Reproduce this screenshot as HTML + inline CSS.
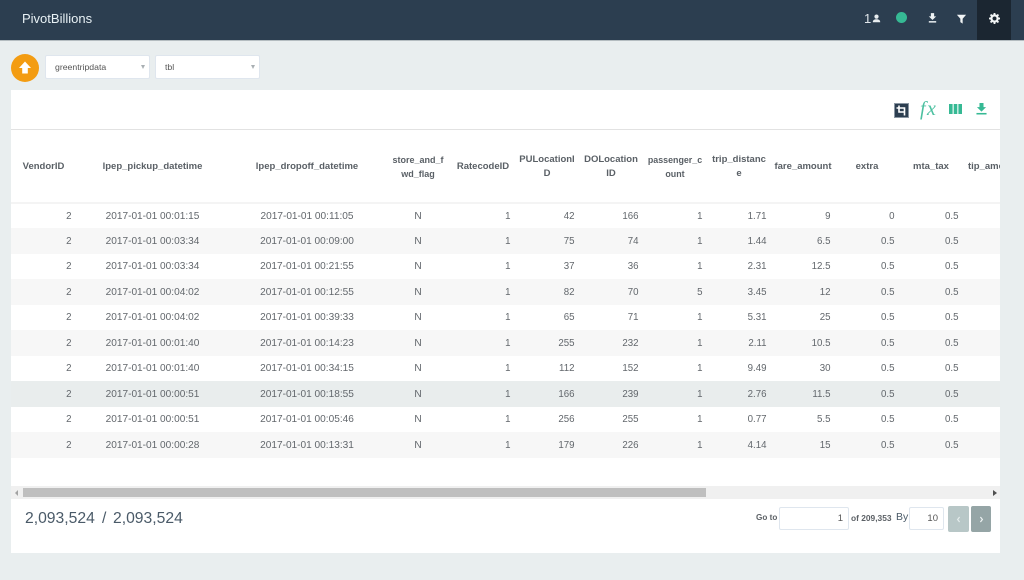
<!DOCTYPE html>
<html><head><meta charset="utf-8"><style>
html,body{margin:0;padding:0}
body{width:1024px;height:580px;position:relative;overflow:hidden;background:#e9eeef;font-family:"Liberation Sans",sans-serif;color:#555b60}
.a{position:absolute}
#nav{left:0;top:0;width:1024px;height:40px;background:#2c3e50;border-bottom:1px solid #b4bcc0}
.sel{top:55px;height:22px;background:#fff;border:1px solid #dfe6ee;font-size:8.7px;line-height:23px;color:#555;border-radius:2px}
.sel i{position:absolute;right:4px;top:9px;width:0;height:0;border-left:2.5px solid transparent;border-right:2.5px solid transparent;border-top:4px solid #a9afb3}
#card{left:11px;top:90px;width:989px;height:463px;background:#fff}
#wrap{left:11px;top:129px;width:989px;height:329px;overflow:hidden;border-top:1px solid #e2e2e2}
table{border-collapse:collapse;table-layout:fixed;width:1016px;font-size:9.5px}
th{height:73px;padding:2px 0 0;font-weight:bold;font-size:9.5px;line-height:14px;text-align:center;white-space:nowrap;color:#5a6066;border-bottom:2px solid #f4f4f4;box-sizing:border-box}
td{height:25px;padding:0 4.5px 0 0;text-align:right;box-sizing:border-box;color:#62676c;font-size:9.7px}
tr:nth-child(odd) td{height:26px}
td.c{text-align:center;padding:0;font-size:10.1px}
tr.s td{background:#f7f7f7}
tr.h td{background:#e9eded}
</style></head><body>
<div id="nav" class="a"></div>
<div class="a" style="left:22px;top:10px;font-size:13px;line-height:18px;color:#e8f1f5">PivotBillions</div>
<div class="a" style="left:864px;top:11px;font-size:13px;line-height:16px;color:#dfe5ea">1</div>
<svg class="a" style="left:872px;top:14px" width="9" height="9" viewBox="0 0 9 9"><circle cx="4.5" cy="2.6" r="2.1" fill="#e8edf0"/><path d="M0.8 8.2C0.8 5.8 2.5 5.2 4.5 5.2S8.2 5.8 8.2 8.2Z" fill="#e8edf0"/></svg>
<div class="a" style="left:896px;top:11.5px;width:11px;height:11px;border-radius:50%;background:#36b994"></div>
<svg class="a" style="left:928px;top:13px" width="9" height="10" viewBox="0 0 11 12"><path d="M3.5 0H7.5V4H10L5.5 8.5 1 4H3.5Z" fill="#eef2f4"/><rect x="1" y="9.8" width="9" height="1.8" fill="#eef2f4"/></svg>
<svg class="a" style="left:956px;top:14px" width="11" height="10" viewBox="0 0 13 13"><path d="M0.5 1H12.5L8 6.2V12.5L5 10.5V6.2Z" fill="#f2f5f6"/></svg>
<div class="a" style="left:977px;top:0;width:34px;height:40px;background:#1b2631"></div>
<svg class="a" style="left:988.5px;top:12.5px" width="11" height="11" viewBox="0 0 12 12"><circle cx="6" cy="6" r="3.4" fill="none" stroke="#f2f5f6" stroke-width="2.4"/><g stroke="#f2f5f6" stroke-width="2"><path d="M6 0V2"/><path d="M6 10V12"/><path d="M0 6H2"/><path d="M10 6H12"/><path d="M1.7 1.7L3 3"/><path d="M9 9L10.3 10.3"/><path d="M1.7 10.3L3 9"/><path d="M9 3L10.3 1.7"/></g></svg>

<div class="a" style="left:11px;top:54px;width:28px;height:28px;border-radius:50%;background:#f39c12"></div>
<svg class="a" style="left:18px;top:61px" width="14" height="13" viewBox="0 0 14 13"><path d="M7 0.5L13 7H9.8V12.5H4.2V7H1Z" fill="#fff"/></svg>
<div class="a sel" style="left:45px;width:94px;padding-left:9px">greentripdata<i></i></div>
<div class="a sel" style="left:155px;width:94px;padding-left:9px">tbl<i></i></div>

<div id="card" class="a"></div>
<svg class="a" style="left:894px;top:103px" width="15" height="15" viewBox="0 0 15 15"><rect width="15" height="15" fill="#2c3e50"/><rect x=".5" y=".5" width="14" height="14" fill="none" stroke="#8b97a3"/><path d="M5 2.5V9H11" fill="none" stroke="#fff" stroke-width="1.6"/><path d="M2.5 5H10.5V12.5" fill="none" stroke="#fff" stroke-width="1.6"/></svg>
<div class="a" style="left:920px;top:97px;font-family:'Liberation Serif',serif;font-style:italic;font-size:20px;letter-spacing:1.5px;line-height:25px;color:#4cc0a0">fx</div>
<svg class="a" style="left:949px;top:104px" width="13" height="10" viewBox="0 0 13 10"><rect x="0" width="3.6" height="10" fill="#36b994"/><rect x="4.7" width="3.6" height="10" fill="#36b994"/><rect x="9.4" width="3.6" height="10" fill="#36b994"/></svg>
<svg class="a" style="left:976px;top:103px" width="11" height="12" viewBox="0 0 12 13"><path d="M3.8 0H8.2V4.5H11L6 9.3 1 4.5H3.8Z" fill="#36b994"/><rect x="0.5" y="10.8" width="11" height="1.7" fill="#36b994"/></svg>

<div id="wrap" class="a"><table>
<colgroup><col style="width:65px"><col style="width:153px"><col style="width:156px"><col style="width:66px"><col style="width:64px"><col style="width:64px"><col style="width:64px"><col style="width:64px"><col style="width:64px"><col style="width:64px"><col style="width:64px"><col style="width:64px"><col style="width:64px"></colgroup>
<tr><th>VendorID</th><th>lpep_pickup_datetime</th><th>lpep_dropoff_datetime</th><th style="font-size:9px">store_and_f<br>wd_flag</th><th>RatecodeID</th><th>PULocationI<br>D</th><th>DOLocation<br>ID</th><th style="font-size:8.9px">passenger_c<br>ount</th><th>trip_distanc<br>e</th><th>fare_amount</th><th>extra</th><th>mta_tax</th><th style="text-align:left;padding-left:5px">tip_amount</th></tr>
<tr><td>2</td><td class="c">2017-01-01 00:01:15</td><td class="c">2017-01-01 00:11:05</td><td class="c">N</td><td>1</td><td>42</td><td>166</td><td>1</td><td>1.71</td><td>9</td><td>0</td><td>0.5</td><td></td></tr>
<tr class="s"><td>2</td><td class="c">2017-01-01 00:03:34</td><td class="c">2017-01-01 00:09:00</td><td class="c">N</td><td>1</td><td>75</td><td>74</td><td>1</td><td>1.44</td><td>6.5</td><td>0.5</td><td>0.5</td><td></td></tr>
<tr><td>2</td><td class="c">2017-01-01 00:03:34</td><td class="c">2017-01-01 00:21:55</td><td class="c">N</td><td>1</td><td>37</td><td>36</td><td>1</td><td>2.31</td><td>12.5</td><td>0.5</td><td>0.5</td><td></td></tr>
<tr class="s"><td>2</td><td class="c">2017-01-01 00:04:02</td><td class="c">2017-01-01 00:12:55</td><td class="c">N</td><td>1</td><td>82</td><td>70</td><td>5</td><td>3.45</td><td>12</td><td>0.5</td><td>0.5</td><td></td></tr>
<tr><td>2</td><td class="c">2017-01-01 00:04:02</td><td class="c">2017-01-01 00:39:33</td><td class="c">N</td><td>1</td><td>65</td><td>71</td><td>1</td><td>5.31</td><td>25</td><td>0.5</td><td>0.5</td><td></td></tr>
<tr class="s"><td>2</td><td class="c">2017-01-01 00:01:40</td><td class="c">2017-01-01 00:14:23</td><td class="c">N</td><td>1</td><td>255</td><td>232</td><td>1</td><td>2.11</td><td>10.5</td><td>0.5</td><td>0.5</td><td></td></tr>
<tr><td>2</td><td class="c">2017-01-01 00:01:40</td><td class="c">2017-01-01 00:34:15</td><td class="c">N</td><td>1</td><td>112</td><td>152</td><td>1</td><td>9.49</td><td>30</td><td>0.5</td><td>0.5</td><td></td></tr>
<tr class="h"><td>2</td><td class="c">2017-01-01 00:00:51</td><td class="c">2017-01-01 00:18:55</td><td class="c">N</td><td>1</td><td>166</td><td>239</td><td>1</td><td>2.76</td><td>11.5</td><td>0.5</td><td>0.5</td><td></td></tr>
<tr><td>2</td><td class="c">2017-01-01 00:00:51</td><td class="c">2017-01-01 00:05:46</td><td class="c">N</td><td>1</td><td>256</td><td>255</td><td>1</td><td>0.77</td><td>5.5</td><td>0.5</td><td>0.5</td><td></td></tr>
<tr class="s"><td>2</td><td class="c">2017-01-01 00:00:28</td><td class="c">2017-01-01 00:13:31</td><td class="c">N</td><td>1</td><td>179</td><td>226</td><td>1</td><td>4.14</td><td>15</td><td>0.5</td><td>0.5</td><td></td></tr>
</table></div>

<div class="a" style="left:11px;top:486px;width:989px;height:13px;background:#f0f0f0"></div>
<div class="a" style="left:23px;top:488px;width:683px;height:9px;background:#bfbfbf"></div>
<div class="a" style="left:15px;top:490px;width:0;height:0;border-top:3px solid transparent;border-bottom:3px solid transparent;border-right:3px solid #a3a3a3"></div>
<div class="a" style="left:993px;top:490px;width:0;height:0;border-top:3px solid transparent;border-bottom:3px solid transparent;border-left:4px solid #505050"></div>

<div class="a" style="left:25px;top:509px;font-size:15.7px;line-height:20px;color:#4a5a68">2,093,524</div>
<div class="a" style="left:102px;top:509px;font-size:15.7px;line-height:20px;color:#4a5a68">/</div>
<div class="a" style="left:113px;top:509px;font-size:15.7px;line-height:20px;color:#4a5a68">2,093,524</div>
<div class="a" style="left:756px;top:512px;font-size:8.2px;line-height:12px;font-weight:bold;color:#5c6166">Go to</div>
<div class="a" style="left:779px;top:507px;width:63px;height:21px;padding-right:5px;background:#fff;border:1px solid #dfe6ee;border-radius:2px;text-align:right;font-size:9.5px;line-height:22px;color:#555">1</div>
<div class="a" style="left:851px;top:512px;font-size:8.4px;line-height:12px;font-weight:bold;color:#5c6166">of 209,353</div>
<div class="a" style="left:896px;top:510px;font-size:10.5px;line-height:14px;color:#4a5a68">By</div>
<div class="a" style="left:909px;top:507px;width:28px;height:21px;padding-right:5px;background:#fff;border:1px solid #dfe6ee;border-radius:2px;text-align:right;font-size:9.5px;line-height:22px;color:#555">10</div>
<div class="a" style="left:948px;top:506px;width:21px;height:26px;background:#b8c7c7;border-radius:2px"></div>
<svg class="a" style="left:955px;top:515px" width="7" height="9" viewBox="0 0 7 9"><path d="M4.6 2L2.6 4.5 4.6 7" fill="none" stroke="#e4ecec" stroke-width="1.2"/></svg>
<div class="a" style="left:971px;top:506px;width:20px;height:26px;background:#95a5a6;border-radius:2px"></div>
<svg class="a" style="left:978px;top:515px" width="7" height="9" viewBox="0 0 7 9"><path d="M2.4 2L4.4 4.5 2.4 7" fill="none" stroke="#eef3f3" stroke-width="1.2"/></svg>
</body></html>
